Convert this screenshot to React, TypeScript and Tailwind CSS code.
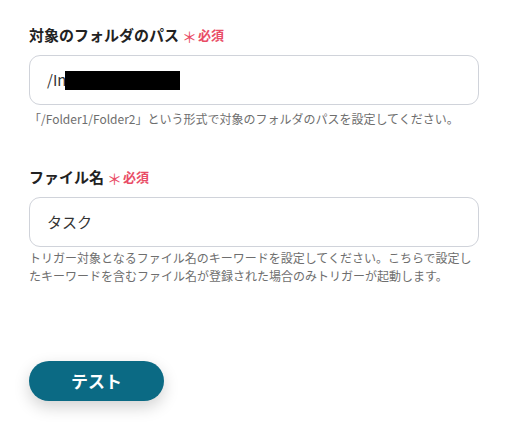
export default function App() {
  return (
    <div
      className="min-h-[437px] bg-white px-[29px] pt-[24px] text-[#333]"
      style={{ fontFamily: '"Noto Sans CJK JP", "Noto Sans", sans-serif' }}
    >
      {/* folder path */}
      <div>
        <div className="flex items-center">
          <span className="text-[15px] font-bold leading-[22px] text-[#222]">対象のフォルダのパス</span>
          <span className="ml-[3px] translate-y-[2px] text-[15px] leading-[22px] text-[#e94c66]">＊</span>
          <span className="ml-[1px] text-[13px] font-bold leading-[22px] text-[#e94c66]">必須</span>
        </div>
        <div className="mt-[9px] flex h-[50px] w-[450px] items-center rounded-[11px] border border-[#d0d3da] bg-white px-[17px]">
          <span className="text-[15px] text-[#333]">/In</span>
          <span className="-ml-[1px] inline-block h-[19px] w-[115px] bg-black" />
        </div>
        <p className="mt-[5px] text-[12px] leading-[18px] text-[#6e6e6e]">
          「/Folder1/Folder2」という形式で対象のフォルダのパスを設定してください。
        </p>
      </div>

      {/* file name */}
      <div className="mt-[38px]">
        <div className="flex items-center">
          <span className="text-[15px] font-bold leading-[22px] text-[#222]">ファイル名</span>
          <span className="ml-[3px] translate-y-[2px] text-[15px] leading-[22px] text-[#e94c66]">＊</span>
          <span className="ml-[1px] text-[13px] font-bold leading-[22px] text-[#e94c66]">必須</span>
        </div>
        <div className="mt-[9px] flex h-[50px] w-[450px] items-center rounded-[11px] border border-[#d0d3da] bg-white px-[17px]">
          <span className="text-[15px] text-[#333]">タスク</span>
        </div>
        <p className="mt-[2px] w-[450px] text-[12px] leading-[18px] text-[#6e6e6e]">
          トリガー対象となるファイル名のキーワードを設定してください。こちらで設定したキーワードを含むファイル名が登録された場合のみトリガーが起動します。
        </p>
      </div>

      <button className="mt-[76px] h-[40px] w-[135px] rounded-full bg-[#0b6a84] text-[17px] font-bold text-white shadow-[0_6px_16px_rgba(0,0,0,0.18)]">
        テスト
      </button>
    </div>
  );
}
